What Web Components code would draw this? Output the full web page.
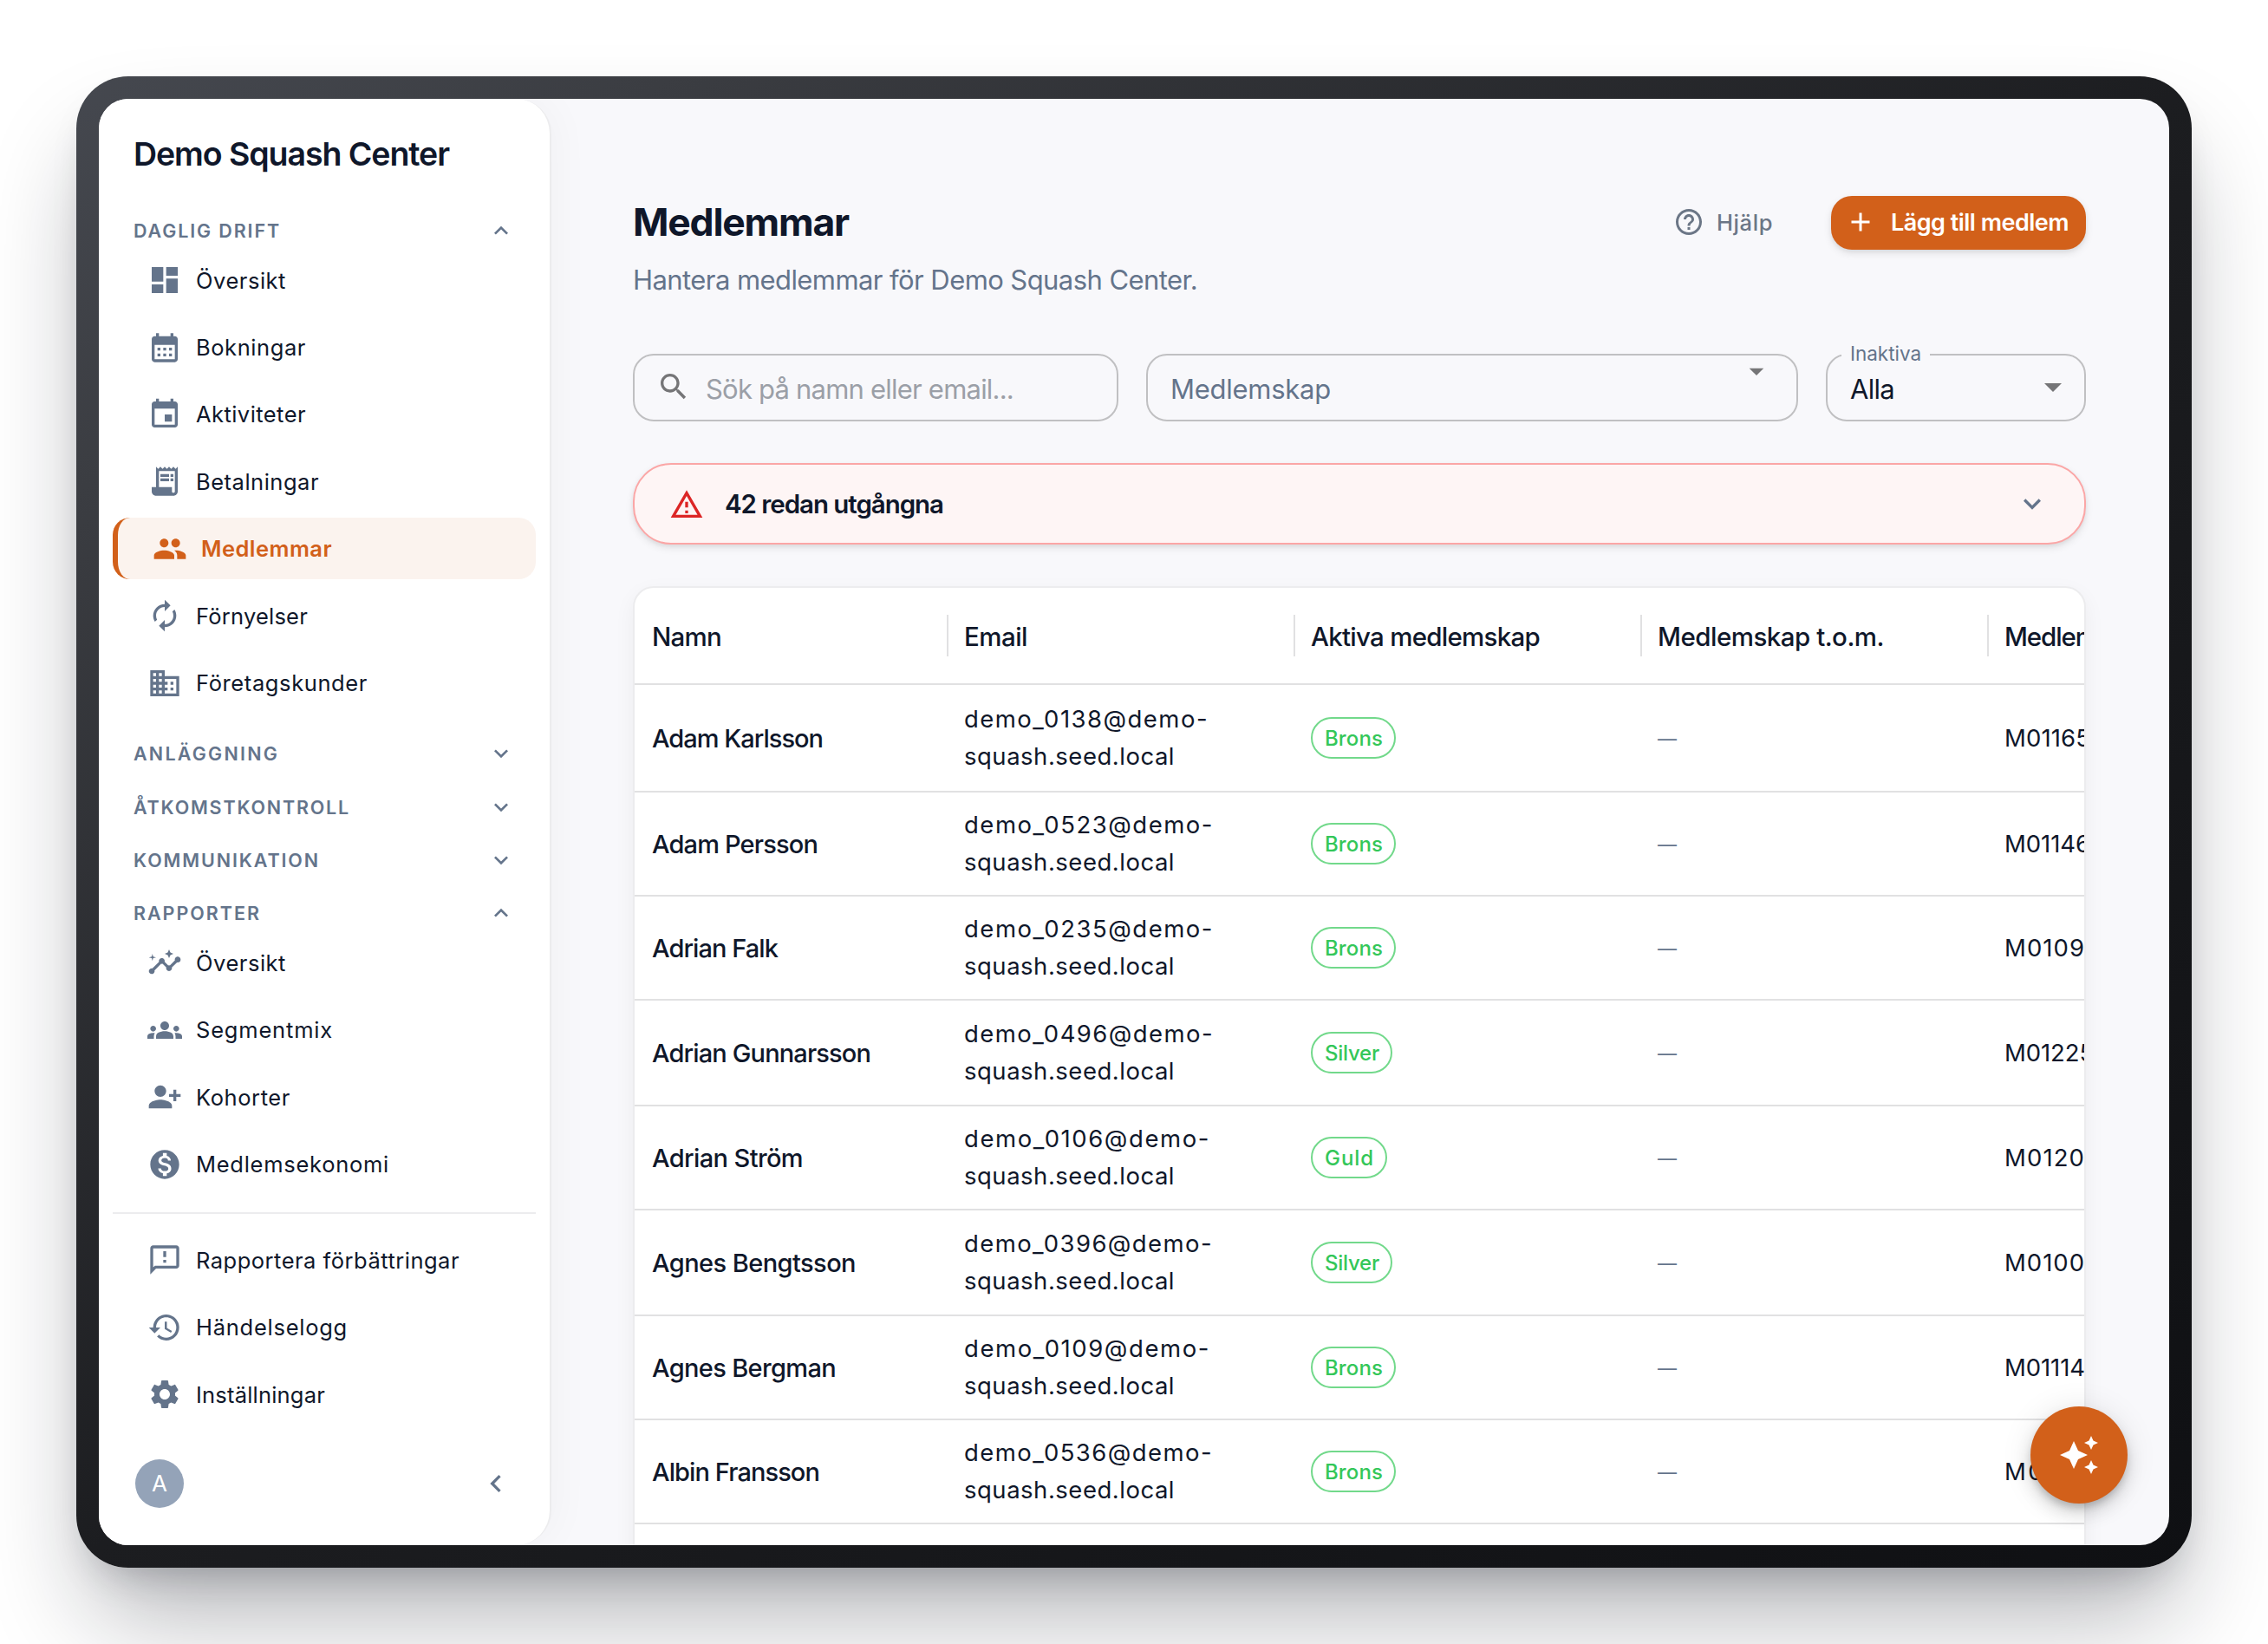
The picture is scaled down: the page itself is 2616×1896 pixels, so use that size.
<!DOCTYPE html>
<html lang="sv">
<head>
<meta charset="utf-8">
<title>Medlemmar</title>
<style>
    html, body { margin: 0; height: 100%; background: #fff; overflow: hidden; }
    body {
        display: flex;
        align-items: center;
        justify-content: center;
        font-family: Inter, "Open Sans", sans-serif;
        color: #0f172a;
        --muted: #64748b;
        --accent: #d2601a;
        --surface: #f8f8fb;
    }
</style>
</head>
<body>
<device-frame>
    <side-bar></side-bar>
    <members-page></members-page>
    <chat-fab slot="overlay"></chat-fab>
</device-frame>

<script>
const ICONS = {
    dashboard: 'M3 13h8V3H3v10zm0 8h8v-6H3v6zm10 0h8V11h-8v10zm0-18v6h8V3h-8z',
    calendar: 'M19 4h-1V2h-2v2H8V2H6v2H5c-1.11 0-1.99.9-1.99 2L3 20c0 1.1.89 2 2 2h14c1.1 0 2-.9 2-2V6c0-1.1-.9-2-2-2zm0 16H5V10h14v10zM9 14H7v-2h2v2zm4 0h-2v-2h2v2zm4 0h-2v-2h2v2zm-8 4H7v-2h2v2zm4 0h-2v-2h2v2zm4 0h-2v-2h2v2z',
    event: 'M17 12h-5v5h5v-5zM16 1v2H8V1H6v2H5c-1.11 0-1.99.9-1.99 2L3 19c0 1.1.89 2 2 2h14c1.1 0 2-.9 2-2V5c0-1.1-.9-2-2-2h-1V1h-2zm3 18H5V8h14v11z',
    receipt: 'M19.5 3.5 18 2l-1.5 1.5L15 2l-1.5 1.5L12 2l-1.5 1.5L9 2 7.5 3.5 6 2v14H3v3c0 1.66 1.34 3 3 3h12c1.66 0 3-1.34 3-3V2l-1.5 1.5zM19 19c0 .55-.45 1-1 1s-1-.45-1-1v-3H8V5h11v14zM9 7h6v2H9zm7 0h2v2h-2zm-7 3h6v2H9zm7 0h2v2h-2z',
    people: 'M16 11c1.66 0 2.99-1.34 2.99-3S17.66 5 16 5c-1.66 0-3 1.34-3 3s1.34 3 3 3zm-8 0c1.66 0 2.99-1.34 2.99-3S9.66 5 8 5C6.34 5 5 6.34 5 8s1.34 3 3 3zm0 2c-2.33 0-7 1.17-7 3.5V19h14v-2.5c0-2.33-4.67-3.5-7-3.5zm8 0c-.29 0-.62.02-.97.05 1.16.84 1.97 1.97 1.97 3.45V19h6v-2.5c0-2.33-4.67-3.5-7-3.5z',
    renew: 'M12 6v3l4-4-4-4v3c-4.42 0-8 3.58-8 8 0 1.57.46 3.03 1.24 4.26L6.7 14.8c-.45-.83-.7-1.79-.7-2.8 0-3.31 2.69-6 6-6zm6.76 1.74L17.3 9.2c.44.84.7 1.79.7 2.8 0 3.31-2.69 6-6 6v-3l-4 4 4 4v-3c4.42 0 8-3.58 8-8 0-1.57-.46-3.03-1.24-4.26z',
    business: 'M12 7V3H2v18h20V7H12zM6 19H4v-2h2v2zm0-4H4v-2h2v2zm0-4H4V9h2v2zm0-4H4V5h2v2zm4 12H8v-2h2v2zm0-4H8v-2h2v2zm0-4H8V9h2v2zm0-4H8V5h2v2zm10 12h-8v-2h2v-2h-2v-2h2v-2h-2V9h8v10zm-2-8h-2v2h2v-2zm0 4h-2v2h2v-2z',
    insights: 'M21 8c-1.45 0-2.26 1.44-1.93 2.51l-3.55 3.56c-.3-.09-.74-.09-1.04 0l-2.55-2.55C12.27 10.45 11.46 9 10 9c-1.45 0-2.27 1.44-1.93 2.52l-4.56 4.55C2.44 15.74 1 16.55 1 18c0 1.1.9 2 2 2 1.45 0 2.26-1.44 1.93-2.51l4.55-4.56c.3.09.74.09 1.04 0l2.55 2.55C12.73 16.55 13.54 18 15 18c1.45 0 2.27-1.44 1.93-2.52l3.56-3.55c1.07.33 2.51-.48 2.51-1.93 0-1.1-.9-2-2-2zM15 9l.94-2.07L18 6l-2.06-.93L15 3l-.92 2.07L12 6l2.08.93zM3.5 11 4 9l2-.5L4 8l-.5-2L3 8l-2 .5L3 9z',
    groups: 'M12 12.75c1.63 0 3.07.39 4.24.9 1.08.48 1.76 1.56 1.76 2.73V18H6v-1.61c0-1.18.68-2.26 1.76-2.73 1.17-.52 2.61-.91 4.24-.91zM4 13c1.1 0 2-.9 2-2s-.9-2-2-2-2 .9-2 2 .9 2 2 2zm1.13 1.1c-.37-.06-.74-.1-1.13-.1-.99 0-1.93.21-2.78.58C.48 14.9 0 15.62 0 16.43V18h4.5v-1.61c0-.83.23-1.61.63-2.29zM20 13c1.1 0 2-.9 2-2s-.9-2-2-2-2 .9-2 2 .9 2 2 2zm4 3.43c0-.81-.48-1.53-1.22-1.85-.85-.37-1.79-.58-2.78-.58-.39 0-.76.04-1.13.1.4.68.63 1.46.63 2.29V18H24v-1.57zM12 6c1.66 0 3 1.34 3 3s-1.34 3-3 3-3-1.34-3-3 1.34-3 3-3z',
    personAdd: 'M13 8c0-2.21-1.79-4-4-4S5 5.79 5 8s1.79 4 4 4 4-1.79 4-4zm2 2v2h3v3h2v-3h3v-2h-3V7h-2v3h-3zM1 18v2h16v-2c0-2.66-5.33-4-8-4s-8 1.34-8 4z',
    money: 'M12 2C6.48 2 2 6.48 2 12s4.48 10 10 10 10-4.48 10-10S17.52 2 12 2zm1.41 16.09V20h-2.67v-1.93c-1.71-.36-3.16-1.46-3.27-3.4h1.96c.1 1.05.82 1.87 2.65 1.87 1.96 0 2.4-.98 2.4-1.59 0-.83-.44-1.61-2.67-2.14-2.48-.6-4.18-1.62-4.18-3.67 0-1.72 1.39-2.84 3.11-3.21V4h2.67v1.95c1.86.45 2.79 1.86 2.85 3.39H14.3c-.05-1.11-.64-1.87-2.22-1.87-1.5 0-2.4.68-2.4 1.64 0 .84.65 1.39 2.67 1.91s4.18 1.39 4.18 3.91c-.01 1.83-1.38 2.83-3.12 3.16z',
    feedback: 'M20 2H4c-1.1 0-1.99.9-1.99 2L2 22l4-4h14c1.1 0 2-.9 2-2V4c0-1.1-.9-2-2-2zm0 14H5.17l-.59.59-.58.58V4h16v12zm-9-4h2v2h-2zm0-6h2v4h-2z',
    history: 'M13 3c-4.97 0-9 4.03-9 9H1l3.89 3.89.07.14L9 12H6c0-3.87 3.13-7 7-7s7 3.13 7 7-3.13 7-7 7c-1.93 0-3.68-.79-4.94-2.06l-1.42 1.42C8.27 19.99 10.51 21 13 21c4.97 0 9-4.03 9-9s-4.03-9-9-9zm-1 5v5l4.28 2.54.72-1.21-3.5-2.08V8H12z',
    settings: 'M19.14 12.94c.04-.3.06-.61.06-.94 0-.32-.02-.64-.07-.94l2.03-1.58c.18-.14.23-.41.12-.61l-1.92-3.32c-.12-.22-.37-.29-.59-.22l-2.39.96c-.5-.38-1.03-.7-1.62-.94l-.36-2.54c-.04-.24-.24-.41-.48-.41h-3.84c-.24 0-.43.17-.47.41l-.36 2.54c-.59.24-1.13.57-1.62.94l-2.39-.96c-.22-.08-.47 0-.59.22L2.74 8.87c-.12.21-.08.47.12.61l2.03 1.58c-.05.3-.09.63-.09.94s.02.64.07.94l-2.03 1.58c-.18.14-.23.41-.12.61l1.92 3.32c.12.22.37.29.59.22l2.39-.96c.5.38 1.03.7 1.62.94l.36 2.54c.05.24.24.41.48.41h3.84c.24 0 .44-.17.47-.41l.36-2.54c.59-.24 1.13-.56 1.62-.94l2.39.96c.22.08.47 0 .59-.22l1.92-3.32c.12-.22.07-.47-.12-.61l-2.01-1.58zM12 15.6c-1.98 0-3.6-1.62-3.6-3.6s1.62-3.6 3.6-3.6 3.6 1.62 3.6 3.6-1.62 3.6-3.6 3.6z',
    help: 'M11 18h2v-2h-2v2zm1-16C6.48 2 2 6.48 2 12s4.48 10 10 10 10-4.48 10-10S17.52 2 12 2zm0 18c-4.41 0-8-3.59-8-8s3.59-8 8-8 8 3.59 8 8-3.59 8-8 8zm0-14c-2.21 0-4 1.79-4 4h2c0-1.1.9-2 2-2s2 .9 2 2c0 2-3 1.75-3 5h2c0-2.25 3-2.5 3-5 0-2.21-1.79-4-4-4z',
    search: 'M15.5 14h-.79l-.28-.27C15.41 12.59 16 11.11 16 9.5 16 5.91 13.09 3 9.5 3S3 5.91 3 9.5 5.91 16 9.5 16c1.61 0 3.09-.59 4.23-1.57l.27.28v.79l5 4.99L20.49 19l-4.99-5zm-6 0C7.01 14 5 11.99 5 9.5S7.01 5 9.5 5 14 7.01 14 9.5 11.99 14 9.5 14z',
    add: 'M19 13h-6v6h-2v-6H5v-2h6V5h2v6h6v2z',
    dropdown: 'm7 10 5 5 5-5z',
    warning: 'M12 5.99 19.53 19H4.47L12 5.99M12 2 1 21h22L12 2zm1 14h-2v2h2v-2zm0-6h-2v4h2v-4z',
    down: 'M16.59 8.59 12 13.17 7.41 8.59 6 10l6 6 6-6z',
    up: 'm12 8-6 6 1.41 1.41L12 10.83l4.59 4.58L18 14z',
    left: 'M15.41 7.41 14 6l-6 6 6 6 1.41-1.41L10.83 12z',
    sparkle: 'm19 9 1.25-2.75L23 5l-2.75-1.25L19 1l-1.25 2.75L15 5l2.75 1.25L19 9zm-7.5.5L9 4 6.5 9.5 1 12l5.5 2.5L9 20l2.5-5.5L17 12l-5.5-2.5zM19 15l-1.25 2.75L15 19l2.75 1.25L19 23l1.25-2.75L23 19l-2.75-1.25L19 15z'
};

class MuiIcon extends HTMLElement{
    constructor() {
        super();
        this.attachShadow({mode:'open'});
    }

    connectedCallback() {
        const size = this.getAttribute('size') || 40;
        this.shadowRoot.innerHTML = `
            <style>
                :host { display: block; flex: none; width: ${size}px; height: ${size}px; }
                svg { display: block; width: 100%; height: 100%; fill: currentColor; }
            </style>
            <svg viewBox="0 0 24 24"><path d="${ICONS[this.getAttribute('name')]}"/></svg>
        `;
    }
}

// one line of text, tracked so that it fills the width in its "w" attribute
class FitText extends HTMLElement{
    constructor() {
        super();
        this.attachShadow({mode:'open'});
    }

    connectedCallback() {
        this.shadowRoot.innerHTML = `
            <style>
                :host { display: block; flex: none; white-space: nowrap; }
                span { display: inline-block; }
            </style>
            <span><slot></slot></span>
        `;
        const width = parseFloat(this.getAttribute('w'));
        const span = this.shadowRoot.querySelector('span');
        const spacing = (width - span.getBoundingClientRect().width) / this.textContent.length;
        span.style.letterSpacing = spacing.toFixed(3) + 'px';
        this.style.width = width + 'px';
    }
}

class DeviceFrame extends HTMLElement{
    constructor() {
        super();
        this.attachShadow({mode:'open'});
    }

    connectedCallback() {
        this.shadowRoot.innerHTML = `
            <style>
                :host {
                    display: block;
                    flex: none;
                    box-sizing: border-box;
                    width: 2440px;
                    height: 1720px;
                    padding: 26px;
                    border-radius: 60px;
                    background: linear-gradient(145deg, #45484f 0%, #3b3d42 14%, #1c1d20 50%, #0f1013 100%);
                    box-shadow: 0 70px 120px -20px rgba(15, 18, 30, .33), 0 24px 48px -24px rgba(15, 18, 30, .28);
                }
                .screen {
                    position: relative;
                    display: flex;
                    height: 1668px;
                    border-radius: 34px;
                    overflow: hidden;
                    background: var(--surface);
                }
            </style>
            <div class="screen">
                <slot></slot>
                <slot name="overlay"></slot>
            </div>
        `;
    }
}

class NavItem extends HTMLElement{
    constructor() {
        super();
        this.attachShadow({mode:'open'});
    }

    connectedCallback() {
        this.shadowRoot.innerHTML = `
            <style>
                :host {
                    display: flex;
                    align-items: center;
                    gap: 16px;
                    box-sizing: border-box;
                    height: 71.4px;
                    margin: 3px 0;
                    padding-left: 40px;
                    border-radius: 20px;
                    font-size: 25.5px;
                }
                mui-icon { color: var(--muted); }
                :host([active]) {
                    border-left: 6px solid var(--accent);
                    background: #fbf3ee;
                    color: var(--accent);
                    font-weight: 600;
                }
                :host([active]) mui-icon { color: var(--accent); }
            </style>
            <mui-icon name="${this.getAttribute('icon')}"></mui-icon>
            <fit-text w="${this.getAttribute('w')}">${this.getAttribute('label')}</fit-text>
        `;
    }
}

class NavSection extends HTMLElement{
    constructor() {
        super();
        this.attachShadow({mode:'open'});
    }

    connectedCallback() {
        this.shadowRoot.innerHTML = `
            <style>
                :host { display: block; margin-bottom: 21.4px; }
                :host([open]) { margin-bottom: 22.9px; }
                .items { display: flex; flex-direction: column; margin-top: -1.5px; }
                :host(:not([open])) .items { margin-top: 0; }
                .head {
                    display: flex;
                    align-items: center;
                    justify-content: space-between;
                    height: 40px;
                    padding: 0 24px;
                    color: var(--muted);
                    font-size: 21.5px;
                    font-weight: 600;
                }
            </style>
            <div class="head">
                <fit-text w="${this.getAttribute('w')}">${this.getAttribute('label')}</fit-text>
                <mui-icon name="${this.hasAttribute('open') ? 'up' : 'down'}" size="32"></mui-icon>
            </div>
            <div class="items"><slot></slot></div>
        `;
    }
}

class SideBar extends HTMLElement{
    constructor() {
        super();
        this.attachShadow({mode:'open'});
    }

    connectedCallback() {
        this.shadowRoot.innerHTML = `
            <style>
                :host {
                    display: flex;
                    flex-direction: column;
                    flex: none;
                    box-sizing: border-box;
                    width: 522px;
                    padding: 0 16px;
                    border-right: 2px solid #ececee;
                    border-radius: 0 40px 40px 0;
                    background: #fff;
                    box-shadow: 4px 0 48px rgba(0, 0, 0, .035);
                }
                h2 {
                    margin: 0;
                    height: 88px;
                    padding: 44px 24px 0;
                    font-size: 37.5px;
                    line-height: 40px;
                    font-weight: 640;
                }
                hr { width: 100%; height: 2px; margin: -6px 0 14.5px; border: 0; background: #ececee; }
                footer {
                    display: flex;
                    align-items: center;
                    justify-content: space-between;
                    margin-top: 36px;
                    padding: 0 26px;
                    color: var(--muted);
                }
                .avatar {
                    width: 56px;
                    border-radius: 50%;
                    background: #94a3b8;
                    color: #fff;
                    font-size: 26px;
                    line-height: 56px;
                    text-align: center;
                }
            </style>
            <h2><fit-text w="364">Demo Squash Center</fit-text></h2>
            <nav-section open label="DAGLIG DRIFT" w="170">
                <nav-item icon="dashboard" label="Översikt" w="104"></nav-item>
                <nav-item icon="calendar" label="Bokningar" w="127"></nav-item>
                <nav-item icon="event" label="Aktiviteter" w="127"></nav-item>
                <nav-item icon="receipt" label="Betalningar" w="142"></nav-item>
                <nav-item active icon="people" label="Medlemmar" w="151"></nav-item>
                <nav-item icon="renew" label="Förnyelser" w="129"></nav-item>
                <nav-item icon="business" label="Företagskunder" w="198"></nav-item>
            </nav-section>
            <nav-section label="ANLÄGGNING" w="168"></nav-section>
            <nav-section label="ÅTKOMSTKONTROLL" w="250"></nav-section>
            <nav-section label="KOMMUNIKATION" w="215"></nav-section>
            <nav-section open label="RAPPORTER" w="147">
                <nav-item icon="insights" label="Översikt" w="104"></nav-item>
                <nav-item icon="groups" label="Segmentmix" w="158"></nav-item>
                <nav-item icon="personAdd" label="Kohorter" w="109"></nav-item>
                <nav-item icon="money" label="Medlemsekonomi" w="223"></nav-item>
            </nav-section>
            <hr>
            <nav-item icon="feedback" label="Rapportera förbättringar" w="304"></nav-item>
            <nav-item icon="history" label="Händelselogg" w="175"></nav-item>
            <nav-item icon="settings" label="Inställningar" w="149"></nav-item>
            <footer>
                <div class="avatar">A</div>
                <mui-icon name="left"></mui-icon>
            </footer>
        `;
    }
}

class OutlinedField extends HTMLElement{
    constructor() {
        super();
        this.attachShadow({mode:'open'});
    }

    connectedCallback() {
        const label = this.getAttribute('label');
        this.shadowRoot.innerHTML = `
            <style>
                :host {
                    position: relative;
                    display: flex;
                    align-items: center;
                    flex: none;
                    box-sizing: border-box;
                    height: 78px;
                    border: 2px solid #c0c0c2;
                    border-radius: 24px;
                    font-size: 31px;
                }
                /* floating label that cuts a notch in the outline */
                .label {
                    position: absolute;
                    left: 16px;
                    top: -16px;
                    padding: 0 10px;
                    background: var(--surface);
                    color: var(--muted);
                    font-size: 22.5px;
                    line-height: 28px;
                }
            </style>
            ${label ? `<div class="label"><fit-text w="82">${label}</fit-text></div>` : ''}
            <slot></slot>
        `;
    }
}

class ExpiredAlert extends HTMLElement{
    constructor() {
        super();
        this.attachShadow({mode:'open'});
    }

    connectedCallback() {
        this.shadowRoot.innerHTML = `
            <style>
                :host {
                    display: flex;
                    align-items: center;
                    flex: none;
                    box-sizing: border-box;
                    height: 94px;
                    padding: 0 40px;
                    border: 2px solid #fba6a6;
                    border-radius: 44px;
                    background: #fef5f5;
                    box-shadow: 0 4px 10px rgba(0, 0, 0, .09), 0 2px 4px rgba(0, 0, 0, .05);
                    font-size: 29.5px;
                    font-weight: 600;
                }
                .warn { color: #dc2626; margin-top: 2px; }
                fit-text { margin: 0 auto 0 24px; }
                .chevron { color: var(--muted); }
            </style>
            <mui-icon class="warn" name="warning"></mui-icon>
            <fit-text w="252">42 redan utgångna</fit-text>
            <mui-icon class="chevron" name="down"></mui-icon>
        `;
    }
}

class StatusChip extends HTMLElement{
    constructor() {
        super();
        this.attachShadow({mode:'open'});
    }

    connectedCallback() {
        this.shadowRoot.innerHTML = `
            <style>
                :host {
                    display: inline-flex;
                    align-items: center;
                    box-sizing: border-box;
                    height: 48px;
                    padding: 0 13px 0 14px;
                    border: 2px solid #72d98b;
                    border-radius: 24px;
                    color: #34c759;
                    font-size: 24px;
                    font-weight: 500;
                }
            </style>
            <slot></slot>
        `;
    }
}

const MEMBERS = [
    // name, width, mailbox, width, tier, width, number, width, row height
    ['Adam Karlsson', 197, 'demo_0138@demo-', 282, 'Brons', 67, 'M01165', 99, 124],
    ['Adam Persson', 191, 'demo_0523@demo-', 288, 'Brons', 67, 'M01146', 99, 120],
    ['Adrian Falk', 145, 'demo_0235@demo-', 288, 'Brons', 67, 'M0109', 93, 120],
    ['Adrian Gunnarsson', 252, 'demo_0496@demo-', 288, 'Silver', 63, 'M01225', 103, 122],
    ['Adrian Ström', 174, 'demo_0106@demo-', 284, 'Guld', 57, 'M0120', 93, 120],
    ['Agnes Bengtsson', 235, 'demo_0396@demo-', 287, 'Silver', 63, 'M0100', 93, 122],
    ['Agnes Bergman', 212, 'demo_0109@demo-', 284, 'Brons', 67, 'M01114', 93, 120],
    ['Albin Fransson', 193, 'demo_0536@demo-', 287, 'Brons', 67, 'M0', 47, 120]
];

class MemberTable extends HTMLElement{
    constructor() {
        super();
        this.attachShadow({mode:'open'});
    }

    connectedCallback() {
        this.shadowRoot.innerHTML = `
            <style>
                :host {
                    display: block;
                    flex: none;
                    box-sizing: border-box;
                    height: 1200px;
                    border: 2px solid #ececee;
                    border-radius: 24px;
                    background: #fff;
                    box-shadow: 0 8px 24px rgba(0, 0, 0, .05);
                    overflow: hidden;
                }
                .row {
                    display: grid;
                    grid-template-columns: 360px 400px 400px 400px 400px;
                    align-items: center;
                    box-sizing: border-box;
                    border-bottom: 2px solid #e1e1e2;
                    font-size: 27.5px;
                }
                .row > div { padding-left: 20px; }
                .head { height: 112px; font-size: 29.5px; font-weight: 500; }
                .head > div {
                    display: flex;
                    align-items: center;
                    height: 48px;
                    background: linear-gradient(#e1e1e2, #e1e1e2) left top / 2px 100% no-repeat;
                }
                .head > div:first-child { background: none; }
                .head fit-text { margin-top: 2px; }
                .name { font-size: 29px; font-weight: 500; }
                .email { line-height: 43px; }
                .chip { display: flex; }
                .none { color: var(--muted); font-size: 22px; padding: 2px 0 0 1px; }
            </style>
            <div class="row head">
                <div><fit-text w="80">Namn</fit-text></div>
                <div><fit-text w="73">Email</fit-text></div>
                <div><fit-text w="264">Aktiva medlemskap</fit-text></div>
                <div><fit-text w="261">Medlemskap t.o.m.</fit-text></div>
                <div><fit-text w="107">Medlem</fit-text></div>
            </div>
            ${MEMBERS.map(m => this.rowTemplate(m)).join('')}
        `;
    }

    rowTemplate([name, nameW, mail, mailW, tier, tierW, number, numberW, height]) {
        return `
            <div class="row" style="height: ${height}px">
                <div class="name"><fit-text w="${nameW}">${name}</fit-text></div>
                <div class="email">
                    <fit-text w="${mailW}">${mail}</fit-text>
                    <fit-text w="243">squash.seed.local</fit-text>
                </div>
                <div class="chip"><status-chip><fit-text w="${tierW}">${tier}</fit-text></status-chip></div>
                <div class="none">—</div>
                <div><fit-text w="${numberW}">${number}</fit-text></div>
            </div>
        `;
    }
}

class MembersPage extends HTMLElement{
    constructor() {
        super();
        this.attachShadow({mode:'open'});
    }

    connectedCallback() {
        this.shadowRoot.innerHTML = `
            <style>
                :host {
                    display: flex;
                    flex-direction: column;
                    flex: 1;
                    min-width: 0;
                    box-sizing: border-box;
                    padding: 112px 96px 0 94px;
                }
                header { display: flex; align-items: center; height: 62px; }
                h1 { margin: 0 auto 3px 0; font-size: 44.5px; line-height: 56px; font-weight: 650; }
                .help {
                    display: flex;
                    align-items: center;
                    gap: 14px;
                    margin: 0 67px 2px 0;
                    color: #6b7686;
                    font-size: 25.5px;
                    font-weight: 500;
                }
                .add {
                    display: flex;
                    align-items: center;
                    box-sizing: border-box;
                    gap: 17px;
                    width: 294px;
                    height: 62px;
                    padding: 0 0 2px 16px;
                    border-radius: 24px;
                    background: var(--accent);
                    box-shadow: 0 4px 10px rgba(0, 0, 0, .1), 0 2px 4px rgba(0, 0, 0, .05);
                    color: #fff;
                    font-size: 27px;
                    font-weight: 600;
                }
                .sub { margin-top: 15px; color: var(--muted); font-size: 31px; line-height: 40px; }
                .filters { display: flex; justify-content: space-between; margin: 65px 0 48px; }
                .filters fit-text { margin-top: 3px; }
                .filters mui-icon { color: #757577; }
                .search { width: 560px; padding-left: 25px; color: #9b9fa7; }
                .search mui-icon { margin-bottom: 2px; }
                .search fit-text { margin-left: 17px; }
                .type { width: 752px; padding: 0 26px; justify-content: space-between; color: var(--muted); }
                .type mui-icon { align-self: flex-start; margin-top: -2px; }
                .state { width: 300px; padding: 0 12px 0 26px; justify-content: space-between; }
                .state mui-icon { margin-bottom: 2px; }
                member-table { margin-top: 48px; }
            </style>
            <header>
                <h1><fit-text w="249">Medlemmar</fit-text></h1>
                <div class="help">
                    <mui-icon name="help" size="36"></mui-icon>
                    <fit-text w="65">Hjälp</fit-text>
                </div>
                <div class="add">
                    <mui-icon name="add" size="36"></mui-icon>
                    <fit-text w="205">Lägg till medlem</fit-text>
                </div>
            </header>
            <div class="sub"><fit-text w="651">Hantera medlemmar för Demo Squash Center.</fit-text></div>
            <div class="filters">
                <outlined-field class="search">
                    <mui-icon name="search"></mui-icon>
                    <fit-text w="355">Sök på namn eller email...</fit-text>
                </outlined-field>
                <outlined-field class="type">
                    <fit-text w="185">Medlemskap</fit-text>
                    <mui-icon name="dropdown"></mui-icon>
                </outlined-field>
                <outlined-field class="state" label="Inaktiva">
                    <fit-text w="51">Alla</fit-text>
                    <mui-icon name="dropdown" size="48"></mui-icon>
                </outlined-field>
            </div>
            <expired-alert></expired-alert>
            <member-table></member-table>
        `;
    }
}

class ChatFab extends HTMLElement{
    constructor() {
        super();
        this.attachShadow({mode:'open'});
    }

    connectedCallback() {
        this.shadowRoot.innerHTML = `
            <style>
                :host {
                    position: absolute;
                    right: 48px;
                    bottom: 48px;
                    display: flex;
                    align-items: center;
                    justify-content: center;
                    width: 112px;
                    height: 112px;
                    border-radius: 50%;
                    background: var(--accent);
                    color: #fff;
                    box-shadow: 0 6px 10px -2px rgba(0, 0, 0, .2), 0 12px 20px rgba(0, 0, 0, .12), 0 2px 36px rgba(0, 0, 0, .1);
                }
            </style>
            <mui-icon name="sparkle" size="48"></mui-icon>
        `;
    }
}

customElements.define("mui-icon", MuiIcon);
customElements.define("fit-text", FitText);
customElements.define("nav-item", NavItem);
customElements.define("nav-section", NavSection);
customElements.define("outlined-field", OutlinedField);
customElements.define("status-chip", StatusChip);
customElements.define("expired-alert", ExpiredAlert);
customElements.define("member-table", MemberTable);
customElements.define("side-bar", SideBar);
customElements.define("members-page", MembersPage);
customElements.define("chat-fab", ChatFab);
customElements.define("device-frame", DeviceFrame);
</script>
</body>
</html>
